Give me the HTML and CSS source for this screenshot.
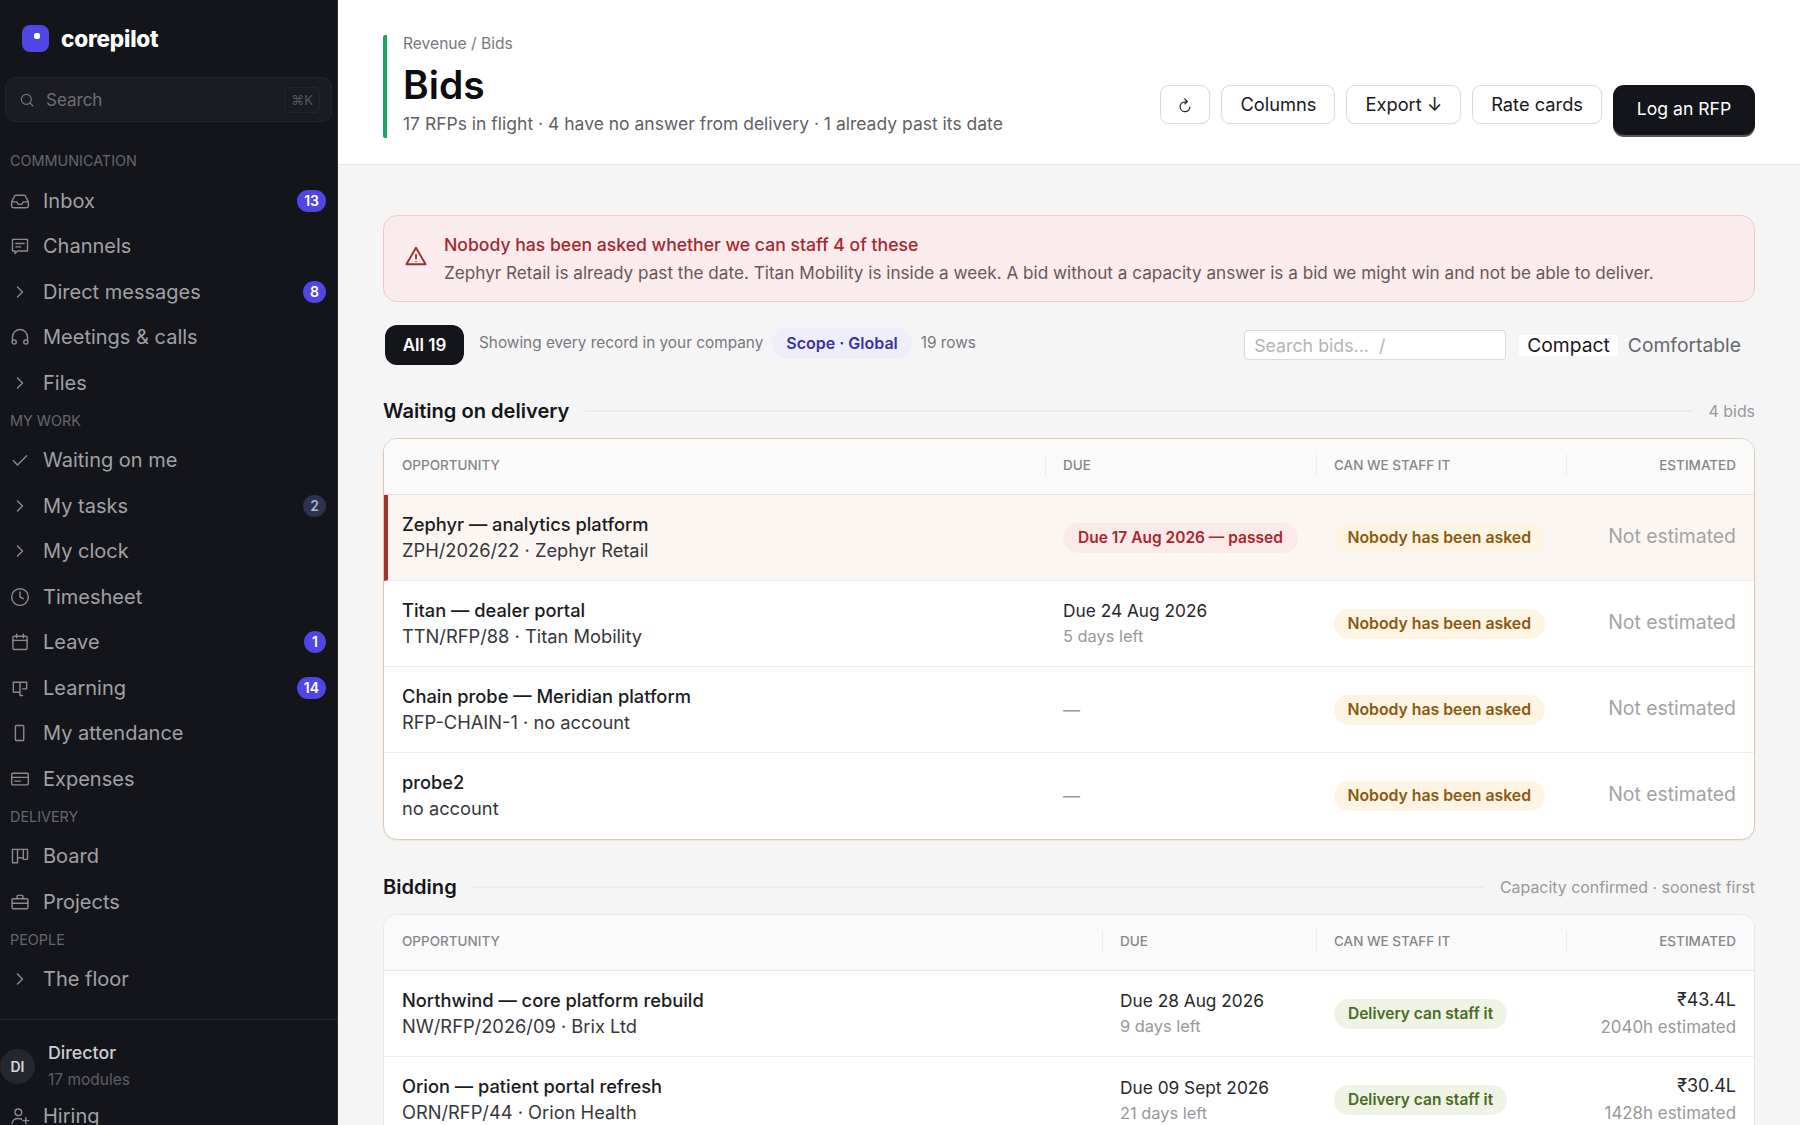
FILE: index.html
```html
<!DOCTYPE html>
<html lang="en">
<head>
    <meta charset="UTF-8">
    <meta name="viewport" content="width=device-width, initial-scale=1.0">
    <title>Bids</title>
    <link rel="stylesheet" href="styles.css">
</head>
<body>
<div class="app">
    <aside class="sidebar">
        <div class="brand">
            <span class="brand-mark"><span class="brand-dot"></span></span>
            <span class="brand-name">corepilot</span>
        </div>
        <div class="side-search">
            <svg class="icon" viewBox="0 0 24 24"><circle cx="11" cy="11" r="7.500"/><path d="M16.500 16.500 21 21"/></svg>
            <span class="side-search-text">Search</span>
            <span class="kbd">⌘K</span>
        </div>

        <div class="nav-label nav-label-first">COMMUNICATION</div>
        <a class="nav-item"><svg class="icon" viewBox="0 0 24 24"><path d="M2 13v5a2 2 0 0 0 2 2h16a2 2 0 0 0 2-2v-5l-3.500-7a2 2 0 0 0-1.800-1H7.300a2 2 0 0 0-1.800 1z"/><path d="M2 13h6l2 3h4l2-3h6"/></svg><span>Inbox</span><b class="badge">13</b></a>
        <a class="nav-item"><svg class="icon" viewBox="0 0 24 24"><path d="M3 4h18v14H9l-3 3v-3H3z"/><path d="M7 9h10M7 13h6"/></svg><span>Channels</span></a>
        <a class="nav-item"><svg class="icon" viewBox="0 0 24 24"><path d="m9 6 6 6-6 6"/></svg><span>Direct messages</span><b class="badge">8</b></a>
        <a class="nav-item"><svg class="icon" viewBox="0 0 24 24"><path d="M3 16v-4a9 9 0 0 1 18 0v4"/><circle cx="5" cy="18" r="2.500"/><circle cx="19" cy="18" r="2.500"/></svg><span>Meetings &amp; calls</span></a>
        <a class="nav-item"><svg class="icon" viewBox="0 0 24 24"><path d="m9 6 6 6-6 6"/></svg><span>Files</span></a>

        <div class="nav-label">MY WORK</div>
        <a class="nav-item"><svg class="icon" viewBox="0 0 24 24"><path d="m4 13 5 5L20 7"/></svg><span>Waiting on me</span></a>
        <a class="nav-item"><svg class="icon" viewBox="0 0 24 24"><path d="m9 6 6 6-6 6"/></svg><span>My tasks</span><b class="badge badge-muted">2</b></a>
        <a class="nav-item"><svg class="icon" viewBox="0 0 24 24"><path d="m9 6 6 6-6 6"/></svg><span>My clock</span></a>
        <a class="nav-item"><svg class="icon" viewBox="0 0 24 24"><circle cx="12" cy="12" r="10"/><path d="M12 6v6l4 2"/></svg><span>Timesheet</span></a>
        <a class="nav-item"><svg class="icon" viewBox="0 0 24 24"><rect x="3.500" y="5" width="17" height="16" rx="1.500"/><path d="M3.500 10h17M8 2.500V7M16 2.500V7"/></svg><span>Leave</span><b class="badge">1</b></a>
        <a class="nav-item"><svg class="icon" viewBox="0 0 24 24"><path d="M4 5h16M4 5v12h8M12 5v16h3M20 5v8h-5"/></svg><span>Learning</span><b class="badge">14</b></a>
        <a class="nav-item"><svg class="icon" viewBox="0 0 24 24"><rect x="6.500" y="3" width="10" height="18" rx="1"/></svg><span>My attendance</span></a>
        <a class="nav-item"><svg class="icon" viewBox="0 0 24 24"><rect x="2" y="5" width="20" height="14" rx="1.500"/><path d="M2 10h20M5.500 14.500h7"/></svg><span>Expenses</span></a>

        <div class="nav-label">DELIVERY</div>
        <a class="nav-item"><svg class="icon" viewBox="0 0 24 24"><path d="M3 4h18v12h-5V4M3 4v16h6V4M9 4v10h7"/></svg><span>Board</span></a>
        <a class="nav-item"><svg class="icon" viewBox="0 0 24 24"><rect x="2.500" y="8" width="19" height="12" rx="1.500"/><path d="M8.500 8V5a1 1 0 0 1 1-1h5a1 1 0 0 1 1 1v3M2.500 13.500h19"/></svg><span>Projects</span></a>

        <div class="nav-label">PEOPLE</div>
        <a class="nav-item"><svg class="icon" viewBox="0 0 24 24"><path d="m9 6 6 6-6 6"/></svg><span>The floor</span></a>

        <div class="side-user">
            <span class="avatar">DI</span>
            <div>
                <div class="user-name">Director</div>
                <div class="user-meta">17 modules</div>
            </div>
        </div>
        <a class="nav-item"><svg class="icon" viewBox="0 0 24 24"><circle cx="10" cy="7.500" r="4"/><path d="M2.500 21c.5-4 3.500-6 7.500-6 1.500 0 2.800.3 4 .9M19 14v7M15.500 17.500h7"/></svg><span>Hiring</span></a>
    </aside>

    <main class="main">
        <header class="page-head">
            <div class="title-block">
                <div class="crumbs">Revenue / Bids</div>
                <h1>Bids</h1>
                <p class="subtitle">17 RFPs in flight · 4 have no answer from delivery · 1 already past its date</p>
            </div>
            <div class="actions">
                <button class="btn btn-icon"><svg viewBox="0 0 24 24"><path d="M18.500 13.500a6.500 6.500 0 1 1-6.500-7h2"/><path d="m11.500 2.500 3.500 3.500-3 3"/></svg></button>
                <button class="btn">Columns</button>
                <button class="btn">Export ↓</button>
                <button class="btn">Rate cards</button>
                <button class="btn btn-primary">Log an RFP</button>
            </div>
        </header>

        <div class="content">
            <div class="alert">
                <svg class="alert-icon" viewBox="0 0 24 24"><path d="M12 3 22.500 21h-21z"/><path d="M12 10v5.500M12 17.600v1"/></svg>
                <div>
                    <div class="alert-title">Nobody has been asked whether we can staff 4 of these</div>
                    <div class="alert-text">Zephyr Retail is already past the date. Titan Mobility is inside a week. A bid without a capacity answer is a bid we might win and not be able to deliver.</div>
                </div>
            </div>

            <div class="toolbar">
                <button class="tab-active">All 19</button>
                <span class="toolbar-note">Showing every record in your company</span>
                <span class="scope">Scope · Global</span>
                <span class="toolbar-note">19 rows</span>
                <span class="spacer"></span>
                <input class="table-search" type="text" placeholder="Search bids...  /">
                <div class="density">
                    <span class="density-on">Compact</span>
                    <span class="density-off">Comfortable</span>
                </div>
            </div>

            <div class="section-head">
                <h2>Waiting on delivery</h2>
                <span class="rule"></span>
                <span class="section-meta">4 bids</span>
            </div>
            <div class="table-card table-card-warn">
                <table class="bids bids-waiting">
                    <thead>
                        <tr>
                            <th><div>OPPORTUNITY</div></th>
                            <th class="split"><div>DUE</div></th>
                            <th class="split"><div>CAN WE STAFF IT</div></th>
                            <th class="split num"><div>ESTIMATED</div></th>
                        </tr>
                    </thead>
                    <tbody>
                        <tr class="row-late">
                            <td><div class="name">Zephyr — analytics platform</div><div class="ref">ZPH/2026/22 · Zephyr Retail</div></td>
                            <td><span class="pill pill-red">Due 17 Aug 2026 — passed</span></td>
                            <td><span class="pill pill-amber">Nobody has been asked</span></td>
                            <td class="num none">Not estimated</td>
                        </tr>
                        <tr>
                            <td><div class="name">Titan — dealer portal</div><div class="ref">TTN/RFP/88 · Titan Mobility</div></td>
                            <td><div class="due">Due 24 Aug 2026</div><div class="left">5 days left</div></td>
                            <td><span class="pill pill-amber">Nobody has been asked</span></td>
                            <td class="num none">Not estimated</td>
                        </tr>
                        <tr>
                            <td><div class="name">Chain probe — Meridian platform</div><div class="ref">RFP-CHAIN-1 · no account</div></td>
                            <td class="dash">—</td>
                            <td><span class="pill pill-amber">Nobody has been asked</span></td>
                            <td class="num none">Not estimated</td>
                        </tr>
                        <tr>
                            <td><div class="name">probe2</div><div class="ref">no account</div></td>
                            <td class="dash">—</td>
                            <td><span class="pill pill-amber">Nobody has been asked</span></td>
                            <td class="num none">Not estimated</td>
                        </tr>
                    </tbody>
                </table>
            </div>

            <div class="section-head section-head-next">
                <h2>Bidding</h2>
                <span class="rule"></span>
                <span class="section-meta">Capacity confirmed · soonest first</span>
            </div>
            <div class="table-card">
                <table class="bids bids-open">
                    <thead>
                        <tr>
                            <th><div>OPPORTUNITY</div></th>
                            <th class="split"><div>DUE</div></th>
                            <th class="split"><div>CAN WE STAFF IT</div></th>
                            <th class="split num"><div>ESTIMATED</div></th>
                        </tr>
                    </thead>
                    <tbody>
                        <tr>
                            <td><div class="name">Northwind — core platform rebuild</div><div class="ref">NW/RFP/2026/09 · Brix Ltd</div></td>
                            <td><div class="due">Due 28 Aug 2026</div><div class="left">9 days left</div></td>
                            <td><span class="pill pill-green">Delivery can staff it</span></td>
                            <td class="num"><div class="amount">₹43.4L</div><div class="left">2040h estimated</div></td>
                        </tr>
                        <tr>
                            <td><div class="name">Orion — patient portal refresh</div><div class="ref">ORN/RFP/44 · Orion Health</div></td>
                            <td><div class="due">Due 09 Sept 2026</div><div class="left">21 days left</div></td>
                            <td><span class="pill pill-green">Delivery can staff it</span></td>
                            <td class="num"><div class="amount">₹30.4L</div><div class="left">1428h estimated</div></td>
                        </tr>
                    </tbody>
                </table>
            </div>
        </div>
    </main>
</div>
</body>
</html>
```

FILE: styles.css
```css
/* General */
* {
    box-sizing: border-box;
}

body {
    margin: 0;
    height: 1125px;
    overflow: hidden;
    font-family: Inter, "Noto Sans", sans-serif;
    color: #17181c;
    background: #f5f5f6;
}

.app {
    display: flex;
    height: 1125px;
}

/* Sidebar */
.sidebar {
    width: 338px;
    flex: none;
    background: #14151a;
    border-right: 1px solid #2a2b30;
    overflow: hidden;
    color: #a1a1a5;
}

.brand {
    display: flex;
    align-items: center;
    gap: 12px;
    height: 77px;
    padding-left: 22px;
}

.brand-mark {
    width: 27px;
    height: 27px;
    border-radius: 8px;
    background: #4f46e5;
    display: flex;
    justify-content: center;
    padding-top: 8px;
}

.brand-dot {
    width: 6px;
    height: 6px;
    border-radius: 2px;
    background: #fff;
    margin-left: 3px;
}

.brand-name {
    color: #fff;
    font-size: 22.500px;
    font-weight: 800;
    letter-spacing: -0.2px;
}

.side-search {
    display: flex;
    align-items: center;
    height: 45px;
    margin: 0 5px;
    padding: 0 11px 0 13px;
    background: #1b1c21;
    border: 1px solid #25262b;
    border-radius: 10px;
    color: #6e6f74;
    font-size: 17px;
}

.side-search .icon {
    width: 16px;
    height: 16px;
    margin: 0;
    stroke: #77787c;
}

.side-search-text {
    margin-left: 11px;
    flex: 1;
}

.kbd {
    font-size: 13px;
    padding: 4px 6px;
    border: 1px solid #25262b;
    border-radius: 5px;
    color: #55565b;
}

.nav-label {
    height: 32px;
    padding: 7px 0 0 10px;
    font-size: 14.400px;
    line-height: 16px;
    color: #66676c;
}

.nav-label-first {
    padding-top: 8px;
    height: 33px;
    margin-top: 23px;
}

.nav-item {
    display: flex;
    align-items: center;
    height: 45.500px;
    padding: 0 11px 0 10px;
    font-size: 20px;
    color: #a1a1a5;
}

.nav-item .icon {
    margin-right: 13px;
}

.nav-item span {
    flex: 1;
}

.icon {
    width: 20px;
    height: 20px;
    flex: none;
    fill: none;
    stroke: #8a8a8e;
    stroke-width: 1.700;
    stroke-linecap: round;
    stroke-linejoin: round;
}

.badge {
    min-width: 22px;
    height: 22px;
    padding: 0 7px;
    border-radius: 11px;
    background: #4f46e5;
    color: #fff;
    font-size: 14px;
    font-weight: 600;
    line-height: 22px;
    text-align: center;
}

.badge-muted {
    background: #2b3350;
    color: #aab3d4;
}

.side-user {
    display: flex;
    align-items: center;
    gap: 13px;
    margin-top: 17px;
    padding-top: 19px;
    border-top: 1px solid #2a2b30;
    height: 74px;
}

.avatar {
    width: 35px;
    height: 35px;
    flex: none;
    border-radius: 50%;
    background: #25272e;
    color: #d8d8da;
    font-size: 14px;
    font-weight: 600;
    line-height: 35px;
    text-align: center;
}

.user-name {
    font-size: 17.800px;
    font-weight: 500;
    color: #cfcfd1;
    line-height: 27px;
}

.user-meta {
    font-size: 15.500px;
    color: #5e5f64;
    line-height: 27px;
}

/* Page header */
.main {
    flex: 1;
    min-width: 0;
    overflow: hidden;
}

.page-head {
    display: flex;
    align-items: center;
    justify-content: space-between;
    height: 165px;
    padding: 0 45px;
    background: #fff;
    border-bottom: 1px solid #e6e6e6;
}

.title-block {
    border-left: 4px solid #1fa463;
    border-radius: 2px;
    padding-left: 16px;
    height: 103px;
    margin-top: 9px;
}

.crumbs {
    font-size: 15.600px;
    line-height: 18px;
    color: #77787c;
}

h1 {
    margin: 9px 0 5px;
    font-size: 39px;
    font-weight: 600;
    line-height: 45px;
    color: #0c0d10;
}

.subtitle {
    margin: 0;
    font-size: 17.500px;
    line-height: 24px;
    color: #5f6065;
}

.actions {
    display: flex;
    align-items: flex-start;
    gap: 11px;
    margin-top: 56px;
}

.btn {
    height: 39px;
    padding: 0 18px 2px;
    background: #fff;
    border: 1px solid #dcdcde;
    border-radius: 9px;
    box-shadow: 0 1px 2px rgba(0, 0, 0, 0.04);
    font-family: inherit;
    font-size: 18.300px;
    color: #17181c;
}

.btn-icon {
    width: 50px;
    padding: 0 0 2px;
}

.btn-icon svg {
    width: 18px;
    height: 18px;
    vertical-align: middle;
    fill: none;
    stroke: #26272b;
    stroke-width: 1.700;
    stroke-linecap: round;
    stroke-linejoin: round;
}

.btn-primary {
    width: 142px;
    height: 50px;
    padding: 0 0 4px;
    background: #14151a;
    border: 0;
    border-radius: 11px;
    box-shadow: 0 2px 0 #55565b;
    font-size: 17.600px;
    color: #fff;
}

/* Content */
.content {
    padding: 50px 45px 0;
}

.alert {
    display: flex;
    gap: 17px;
    height: 87px;
    padding: 16px 21px;
    background: #faecec;
    border: 1px solid #efc9c9;
    border-radius: 14px;
}

.alert-icon {
    width: 22px;
    height: 22px;
    flex: none;
    margin-top: 13px;
    fill: none;
    stroke: #a8262e;
    stroke-width: 2;
    stroke-linejoin: round;
}

.alert-title {
    font-size: 17.600px;
    font-weight: 500;
    line-height: 26px;
    color: #a8262e;
}

.alert-text {
    margin-top: 2px;
    font-size: 17.150px;
    line-height: 26px;
    color: #66585a;
}

.toolbar {
    display: flex;
    align-items: center;
    height: 40px;
    margin-top: 23px;
    padding-left: 2px;
}

.tab-active {
    width: 79px;
    height: 40px;
    border: 0;
    border-radius: 12px;
    background: #14151a;
    color: #fff;
    font-family: inherit;
    font-size: 17px;
    font-weight: 600;
}

.toolbar-note {
    margin-top: -5px;
    font-size: 15.350px;
    color: #77787c;
}

.tab-active + .toolbar-note {
    margin-left: 15px;
}

.scope {
    height: 31px;
    margin: -4px 9px 0 9px;
    padding: 0 14px;
    border-radius: 16px;
    background: #eeeefb;
    color: #3a31a3;
    font-size: 16px;
    font-weight: 600;
    line-height: 31px;
}

.spacer {
    flex: 1;
}

.table-search {
    width: 262px;
    height: 30px;
    padding: 0 9px;
    background: #fff;
    border: 1px solid #d8d8da;
    border-radius: 4px;
    font-family: inherit;
    font-size: 17.800px;
    outline: none;
}

.table-search::placeholder {
    color: #b4b4b6;
}

.density {
    display: flex;
    align-items: center;
    gap: 10px;
    margin: 0 14px 0 13px;
    font-size: 19.300px;
}

.density-on {
    height: 21px;
    padding: 0 8px;
    background: #fff;
    line-height: 21px;
    color: #17181c;
}

.density-off {
    color: #66676c;
}

.section-head {
    display: flex;
    align-items: center;
    gap: 16px;
    height: 30px;
    margin: 31px 0 12px;
}

.section-head-next {
    margin: 32px 0 12px;
}

h2 {
    margin: 0;
    font-size: 20.100px;
    font-weight: 600;
    color: #14151a;
}

.rule {
    flex: 1;
    height: 2px;
    background: #ebecec;
}

.section-meta {
    font-size: 15.900px;
    color: #98989b;
}

/* Tables */
.table-card {
    background: #fff;
    border: 1px solid #e7e7e8;
    border-radius: 14px;
    overflow: hidden;
}

.table-card-warn {
    border-color: #e3c9b0;
    box-shadow: 0 1px 2px rgba(0, 0, 0, 0.06);
}

.bids {
    width: 100%;
    border-collapse: separate;
    border-spacing: 0;
    table-layout: fixed;
}

.bids th {
    height: 56px;
    padding: 0 0 3px;
    background: #fafafa;
    border-bottom: 1px solid #e6e6e6;
    font-size: 13.500px;
    font-weight: 500;
    color: #85868a;
    text-align: left;
}

.bids th:first-child {
    padding-left: 18px;
}

.bids th.split div {
    height: 22px;
    line-height: 22px;
    padding-left: 17px;
    border-left: 1px solid #ebebec;
}

.bids th.num div {
    padding-right: 18px;
    text-align: right;
}

.bids-waiting th:nth-child(1) { width: 661px; }
.bids-waiting th:nth-child(2) { width: 271px; }
.bids-waiting th:nth-child(3) { width: 250px; }
.bids-open th:nth-child(1) { width: 718px; }
.bids-open th:nth-child(2) { width: 214px; }
.bids-open th:nth-child(3) { width: 250px; }

.bids td {
    height: 86px;
    padding: 0 0 0 18px;
    border-bottom: 1px solid #ececec;
}

.bids td:first-child {
    padding-left: 18px;
}

.bids tbody tr:last-child td {
    border-bottom: 0;
}

.row-late td {
    background: #fcf6f2;
}

.bids .row-late td:first-child {
    padding-left: 14px;
    border-left: 4px solid #a8322a;
}

.name {
    font-size: 18.300px;
    font-weight: 500;
    line-height: 26px;
    color: #1a1b1f;
}

.ref {
    margin-bottom: 2px;
    font-size: 18.300px;
    line-height: 26px;
    color: #36373c;
}

.due {
    font-size: 17.300px;
    line-height: 26px;
    color: #26272b;
}

.left {
    font-size: 16.400px;
    line-height: 25px;
    color: #98989b;
}

.num .left {
    font-size: 16.900px;
    line-height: 28px;
}

.dash {
    color: #98989b;
    font-size: 17px;
}

.pill {
    display: inline-block;
    height: 30px;
    padding: 0 14px;
    border-radius: 15px;
    font-size: 15.500px;
    font-weight: 600;
    line-height: 30px;
}

.pill-red {
    padding: 0 15px;
    background: #fbeaea;
    color: #a8262e;
}

.pill-amber {
    padding: 0 13.500px;
    font-size: 15.800px;
    background: #fdf4e3;
    color: #8a5a10;
}

.pill-green {
    background: #eef3e6;
    color: #4a6b1f;
}

.bids td.num {
    padding: 0 18px 0 0;
    text-align: right;
}

.bids td.none {
    padding-bottom: 4px;
    font-size: 19.400px;
    color: #a3a3a5;
}

.amount {
    font-size: 18px;
    line-height: 26px;
    color: #26272b;
}
```
